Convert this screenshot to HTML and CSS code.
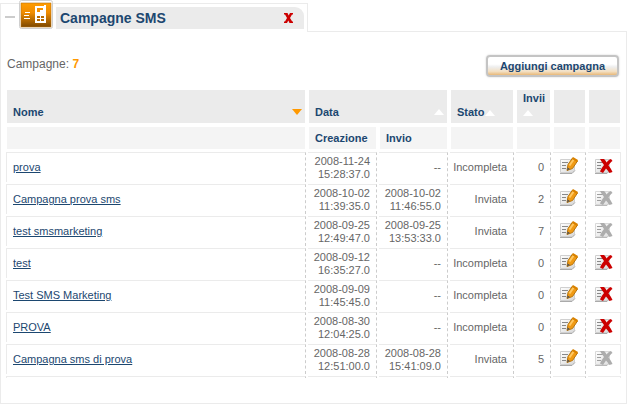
FILE: index.html
```html
<!DOCTYPE html>
<html lang="it">
<head>
    <meta charset="utf-8">
    <title>Campagne SMS</title>
    <link rel="stylesheet" href="styles.css">
</head>
<body>
    <!-- shared icons -->
    <svg class="defs" width="0" height="0">
        <defs>
            <linearGradient id="orange" x1="0" y1="0" x2="0" y2="1">
                <stop offset="0" stop-color="#ff9c00"/>
                <stop offset="0.4" stop-color="#f08c00"/>
                <stop offset="1" stop-color="#7d4800"/>
            </linearGradient>
            <linearGradient id="paper" x1="0" y1="0" x2="1" y2="1">
                <stop offset="0" stop-color="#ffffff"/>
                <stop offset="1" stop-color="#d8d8d8"/>
            </linearGradient>
        </defs>
        <symbol id="sheet" viewBox="0 0 20 20">
            <path d="M1.500 3.500h14v11l-2 2h-12z" fill="url(#paper)" stroke="#d0d0d0"/>
            <path d="M1 17.500h12l3-3" fill="none" stroke="#aaa"/>
            <path d="M3 6.500h6M3 9.500h4M3 12.500h4" stroke="#888"/>
        </symbol>
        <symbol id="edit" viewBox="0 0 20 20">
            <use href="#sheet"/>
            <path d="M8 14.500l1-6 4.500-6.500 5 3-5 7.500z" fill="#f09a14" stroke="#b8750c"/>
            <path d="M10.500 9.500l4.500-6.500" stroke="#ffc863" stroke-width="2"/>
            <path d="M14 1l5 3-1 2-5-3z" fill="#d98200"/>
            <path d="M8 14.500l.7-3 2.300 1.500z" fill="#555"/>
        </symbol>
        <symbol id="delete" viewBox="0 0 20 20">
            <use href="#sheet"/>
            <path d="M6 3h4c1 1 2 2 2.500 3.500C13.500 5 15 3.500 17 3l1.500 2c-1.500 1-3 2.500-4 4.500 1.500 2 3 4 4 6.500l-3 1c-1-1.500-2-3-3.500-4.500-1 1.500-2 3-3 4.500l-3-1.500c1-2.500 2.500-4.500 4-6.500C8.500 7 7 5 6 3z" fill="currentColor"/>
        </symbol>
    </svg>

    <div class="window">
        <div class="tabs">
            <div class="tab">
                <button class="minimize" type="button" aria-label="Riduci"></button>
                <svg class="tab-icon" width="34" height="29" viewBox="0 0 34 29">
                    <rect x="0.500" y="0.500" width="33" height="28" rx="2" fill="#fff" stroke="#cfcfcf"/>
                    <rect x="2" y="3" width="30" height="24" fill="url(#orange)" stroke="#b87413" stroke-width="0.600"/>
                    <path d="M6 12.500h5M5 15.500h5M5 18.500h6" stroke="#fff"/>
                    <path d="M16 6h9V5h2v9H16zM18 8v4h3v-2h3V8z" fill="#fff" fill-rule="evenodd"/>
                    <path d="M16 14h11v9H16z" fill="#fff"/>
                    <path d="M18 16h3v2h-3zM22 16h3v2h-3zM18 19h3v2h-3zM22 19h3v2h-3z" fill="#b86a00"/>
                </svg>
                <div class="tab-bar">
                    <h1>Campagne SMS</h1>
                    <button class="close" type="button" aria-label="Chiudi">
                        <svg width="9" height="10" viewBox="0 0 9 10"><path d="M0 0h3.500l1.200 2.500L6 0h3v1.500H8L6 5l2.200 3.500H9V10H5.500L4.300 7.500 3 10H0V8.500h1L3 5 1 1.500H0z" fill="#c00"/></svg>
                    </button>
                </div>
            </div>
            <div class="tabs-rest"></div>
        </div>

        <div class="panel">
            <div class="toolbar">
                <p class="count">Campagne: <strong>7</strong></p>
                <button class="add" type="button">Aggiungi campagna</button>
            </div>

            <table class="campaigns">
                <colgroup>
                    <col>
                    <col class="col-date">
                    <col class="col-date">
                    <col class="col-status">
                    <col class="col-sent">
                    <col class="col-action">
                    <col class="col-action">
                </colgroup>
                <thead>
                    <tr class="main-head">
                        <th><div class="sort">Nome <i class="arrow down"></i></div></th>
                        <th colspan="2"><div class="sort">Data <i class="arrow"></i></div></th>
                        <th>Stato<i class="arrow"></i></th>
                        <th>Invii<br><i class="arrow"></i></th>
                        <th></th>
                        <th></th>
                    </tr>
                    <tr class="sub-head">
                        <th></th>
                        <th>Creazione</th>
                        <th>Invio</th>
                        <th></th>
                        <th></th>
                        <th></th>
                        <th></th>
                    </tr>
                </thead>
                <tbody id="rows"></tbody>
                <tfoot>
                    <tr><td></td><td></td><td></td><td></td><td></td><td></td><td></td></tr>
                </tfoot>
            </table>
        </div>
    </div>

    <script src="script.js"></script>
</body>
</html>
```
FILE: styles.css
```css
body{
    margin: 0;
    background: #fff;
    color: #666;
    font-family: "Liberation Sans", Arial, sans-serif;
    font-size: 11px;
}
button{
    padding: 0;
    border: none;
    background: none;
    font-family: inherit;
    cursor: pointer;
}
.defs{
    position: absolute;
}
.window{
    display: flex;
    flex-direction: column;
    min-height: 100vh;
}
.tabs{
    display: flex;
    height: 32px;
}
.tab{
    display: flex;
    box-sizing: border-box;
    width: 308px;
    margin-top: 3px;
    padding-right: 3px;
    border: 1px solid #ebebeb;
    border-bottom: none;
}
.tabs-rest{
    flex: 1;
    border-bottom: 1px solid #ebebeb;
}
.minimize{
    width: 10px;
    height: 2px;
    margin: 12px 4px 0;
    background: #ccc;
}
.tab-icon{
    flex: none;
    margin-top: -4px;
}
.tab-bar{
    flex: 1;
    display: flex;
    justify-content: space-between;
    align-items: center;
    height: 22px;
    margin: 3px 0 0 3px;
    padding: 0 11px 0 4px;
    border-top-right-radius: 9px;
    background: #ebebeb;
}
h1{
    margin: 0;
    color: #1c4770;
    font-size: 14px;
    line-height: 22px;
}
.close{
    display: flex;
}
.panel{
    flex: 1;
    padding: 0 3px 20px;
    border: 1px solid #ebebeb;
    border-top: none;
}
.toolbar{
    display: flex;
    justify-content: space-between;
    align-items: flex-start;
    padding: 23px 4px 10px 3px;
}
.count{
    margin: 0;
    font-size: 12px;
    line-height: 18px;
}
.count strong{
    color: #f90;
}
.add{
    height: 22px;
    padding: 0 12px;
    border: 2px solid #c4c4c4;
    border-radius: 4px;
    background: linear-gradient(#fff 40%, #eee 55%, #f3e0c4 80%, #e8b878);
    box-shadow: 0 0 2px #ccc;
    color: #1c4770;
    font-size: 11px;
    font-weight: bold;
}
.campaigns{
    width: 100%;
    table-layout: fixed;
    border-spacing: 2px;
}
.col-date{
    width: 69px;
}
.col-status{
    width: 64px;
}
.col-sent{
    width: 35px;
}
.col-action{
    width: 33px;
}
th{
    box-sizing: border-box;
    padding: 0 6px;
    border: 1px solid #fff;
    background: #ebebeb;
    background-clip: padding-box;
    color: #1c4770;
    font-size: 11px;
    line-height: 14px;
    text-align: left;
    vertical-align: bottom;
}
.main-head th{
    height: 35px;
    padding-bottom: 4px;
}
.sub-head th{
    height: 24px;
    padding-right: 0;
    padding-bottom: 4px;
    background-color: #f4f4f4;
}
.sort{
    display: flex;
    justify-content: space-between;
    align-items: center;
    margin-right: -3px;
}
.arrow{
    display: inline-block;
    border: 5px solid transparent;
    border-top: none;
    border-bottom: 6px solid #fff;
}
.arrow.down{
    border-top: 6px solid #f90;
    border-bottom: none;
}
td{
    box-sizing: border-box;
    height: 30px;
    padding: 0 6px;
    border-top: 1px solid #ebebeb;
    border-right: 1px dashed #ccc;
    line-height: 13px;
    text-align: right;
}
td:first-child{
    border-left: 1px solid #ebebeb;
    text-align: left;
}
td:last-child{
    border-right: 1px solid #ebebeb;
}
td a{
    color: #1c4770;
}
.date{
    padding-left: 0;
    white-space: pre-line;
}
.status{
    padding-left: 0;
}
.action{
    padding: 0 6px 3px;
}
.action button{
    display: block;
    color: #c00;
}
.action svg{
    display: block;
}
.action button:disabled{
    color: #999;
    cursor: default;
}
.action button:disabled svg{
    opacity: 0.8;
}
tfoot td{
    height: 2px;
    padding: 0;
    line-height: 0;
}
```
FILE: script.js
```javascript
const campaigns = [
    { name: "prova", created: "2008-11-24\n15:28:37.0", sent: "--", count: 0 },
    { name: "Campagna prova sms", created: "2008-10-02\n11:39:35.0", sent: "2008-10-02\n11:46:55.0", count: 2 },
    { name: "test smsmarketing", created: "2008-09-25\n12:49:47.0", sent: "2008-09-25\n13:53:33.0", count: 7 },
    { name: "test", created: "2008-09-12\n16:35:27.0", sent: "--", count: 0 },
    { name: "Test SMS Marketing", created: "2008-09-09\n11:45:45.0", sent: "--", count: 0 },
    { name: "PROVA", created: "2008-08-30\n12:04:25.0", sent: "--", count: 0 },
    { name: "Campagna sms di prova", created: "2008-08-28\n12:51:00.0", sent: "2008-08-28\n15:41:09.0", count: 5 }
];

const icon = (name) => `<svg width="20" height="20"><use href="#${name}"/></svg>`;

document.getElementById('rows').innerHTML = campaigns.map(c => `
    <tr>
        <td><a href="#">${c.name}</a></td>
        <td class="date">${c.created}</td>
        <td class="date">${c.sent}</td>
        <td class="status">${c.count ? 'Inviata' : 'Incompleta'}</td>
        <td>${c.count}</td>
        <td class="action"><button type="button" aria-label="Modifica">${icon('edit')}</button></td>
        <td class="action"><button type="button" aria-label="Elimina" ${c.count ? 'disabled' : ''}>${icon('delete')}</button></td>
    </tr>`).join('');
```
